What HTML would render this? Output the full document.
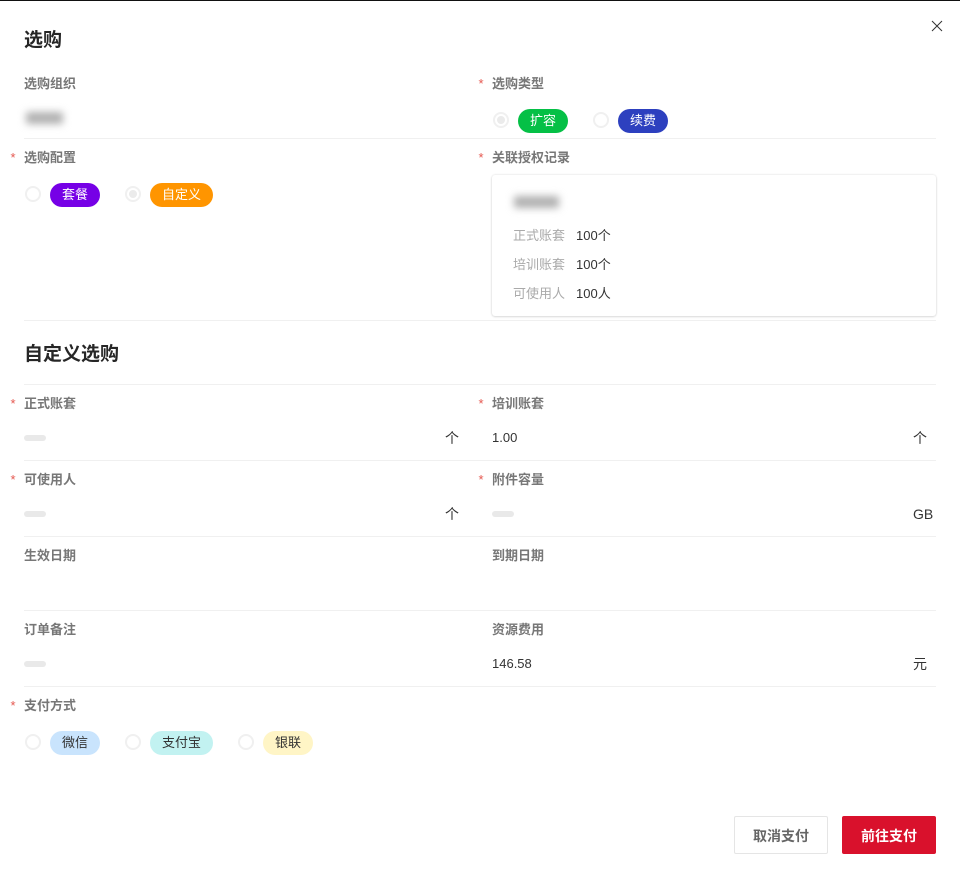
<!DOCTYPE html>
<html lang="zh">
<head>
<meta charset="utf-8">
<title>选购</title>
<style>
html,body{margin:0;padding:0;background:#fff;}
body{width:960px;height:874px;position:relative;overflow:hidden;font-family:"Liberation Sans","Noto Sans CJK SC",sans-serif;}
#topbar{position:absolute;left:0;top:0;width:960px;height:1px;background:#111;}
.t{position:absolute;white-space:nowrap;}
.h{font-size:19px;font-weight:700;color:#262626;line-height:26px;height:26px;}
.l{font-size:13px;font-weight:700;color:#777;line-height:18px;height:18px;}
.s{position:absolute;font-size:13px;color:#e5574f;line-height:18px;height:18px;width:8px;text-align:center;}
.line{position:absolute;left:24px;width:912px;height:1px;background:#f0f0f0;}
.r{position:absolute;width:12px;height:12px;border:2px solid #f0f0f0;border-radius:50%;background:#fff;}
.r.on:after{content:"";position:absolute;left:2px;top:2px;width:8px;height:8px;border-radius:50%;background:#ebebeb;}
.p{position:absolute;height:24px;line-height:24px;border-radius:12px;text-align:center;font-size:13px;color:#fff;}
.v{font-size:13px;color:#333;line-height:18px;height:18px;}
.u{font-size:14px;color:#333;line-height:20px;height:20px;}
.b{position:absolute;width:22px;height:6px;border-radius:3px;background:#e9e9e9;}
.blur{position:absolute;background:#b0b0b0;filter:blur(4px);border-radius:2px;}
#card{position:absolute;left:492px;top:175px;width:444px;height:141px;background:#fff;border-radius:3px;box-shadow:0 0 2px rgba(0,0,0,.14),0 1px 2px rgba(0,0,0,.1);}
.k{font-size:13px;color:#aaa;line-height:18px;height:18px;}
.n{font-size:13px;color:#333;line-height:18px;height:18px;}
.btn{position:absolute;top:816px;height:38px;width:94px;text-align:center;font-size:14px;font-weight:700;border-radius:2px;box-sizing:border-box;}
</style>
</head>
<body>
<div id="topbar"></div>
<svg style="position:absolute;left:930px;top:19px" width="14" height="14" viewBox="0 0 14 14"><path d="M2 2L12 12M12 2L2 12" stroke="#333" stroke-width="1" fill="none"/></svg>

<div class="t h" style="left:24px;top:28px">选购</div>

<div class="t l" style="left:24px;top:75px">选购组织</div>
<div class="blur" style="left:26px;top:112px;width:37px;height:12px"></div>
<div class="s" style="left:477px;top:75px">*</div>
<div class="t l" style="left:492px;top:75px">选购类型</div>
<div class="r on" style="left:493px;top:112px"></div>
<div class="p" style="left:518px;top:109px;width:50px;background:#05c046">扩容</div>
<div class="r" style="left:593px;top:112px"></div>
<div class="p" style="left:618px;top:109px;width:50px;background:#2d40bf">续费</div>
<div class="line" style="top:138px"></div>

<div class="s" style="left:9px;top:149px">*</div>
<div class="t l" style="left:24px;top:149px">选购配置</div>
<div class="r" style="left:25px;top:186px"></div>
<div class="p" style="left:50px;top:183px;width:50px;background:#7600e6">套餐</div>
<div class="r on" style="left:125px;top:186px"></div>
<div class="p" style="left:150px;top:183px;width:63px;background:#ff9500">自定义</div>

<div class="s" style="left:477px;top:149px">*</div>
<div class="t l" style="left:492px;top:149px">关联授权记录</div>
<div id="card"></div>
<div class="blur" style="left:514px;top:196px;width:45px;height:12px"></div>
<div class="t k" style="left:513px;top:227px">正式账套</div><div class="t n" style="left:576px;top:227px">100个</div>
<div class="t k" style="left:513px;top:256px">培训账套</div><div class="t n" style="left:576px;top:256px">100个</div>
<div class="t k" style="left:513px;top:285px">可使用人</div><div class="t n" style="left:576px;top:285px">100人</div>
<div class="line" style="top:320px"></div>

<div class="t h" style="left:24px;top:342px">自定义选购</div>
<div class="line" style="top:384px"></div>

<div class="s" style="left:9px;top:395px">*</div>
<div class="t l" style="left:24px;top:395px">正式账套</div>
<div class="b" style="left:24px;top:435px"></div>
<div class="t u" style="left:445px;top:428px">个</div>
<div class="s" style="left:477px;top:395px">*</div>
<div class="t l" style="left:492px;top:395px">培训账套</div>
<div class="t v" style="left:492px;top:429px">1.00</div>
<div class="t u" style="left:913px;top:428px">个</div>
<div class="line" style="top:460px"></div>

<div class="s" style="left:9px;top:471px">*</div>
<div class="t l" style="left:24px;top:471px">可使用人</div>
<div class="b" style="left:24px;top:511px"></div>
<div class="t u" style="left:445px;top:504px">个</div>
<div class="s" style="left:477px;top:471px">*</div>
<div class="t l" style="left:492px;top:471px">附件容量</div>
<div class="b" style="left:492px;top:511px"></div>
<div class="t u" style="left:913px;top:504px">GB</div>
<div class="line" style="top:536px"></div>

<div class="t l" style="left:24px;top:547px">生效日期</div>
<div class="t l" style="left:492px;top:547px">到期日期</div>
<div class="line" style="top:610px"></div>

<div class="t l" style="left:24px;top:621px">订单备注</div>
<div class="b" style="left:24px;top:661px"></div>
<div class="t l" style="left:492px;top:621px">资源费用</div>
<div class="t v" style="left:492px;top:655px">146.58</div>
<div class="t u" style="left:913px;top:654px">元</div>
<div class="line" style="top:686px"></div>

<div class="s" style="left:9px;top:697px">*</div>
<div class="t l" style="left:24px;top:697px">支付方式</div>
<div class="r" style="left:25px;top:734px"></div>
<div class="p" style="left:50px;top:731px;width:50px;background:#c9e4fd;color:#333">微信</div>
<div class="r" style="left:125px;top:734px"></div>
<div class="p" style="left:150px;top:731px;width:63px;background:#c2f2f1;color:#333">支付宝</div>
<div class="r" style="left:238px;top:734px"></div>
<div class="p" style="left:263px;top:731px;width:50px;background:#fff5c6;color:#333">银联</div>

<div class="btn" style="left:734px;background:#fff;border:1px solid #e5e5e5;color:#666;line-height:38px">取消支付</div>
<div class="btn" style="left:842px;background:#d9112c;color:#fff;line-height:40px">前往支付</div>
</body>
</html>
